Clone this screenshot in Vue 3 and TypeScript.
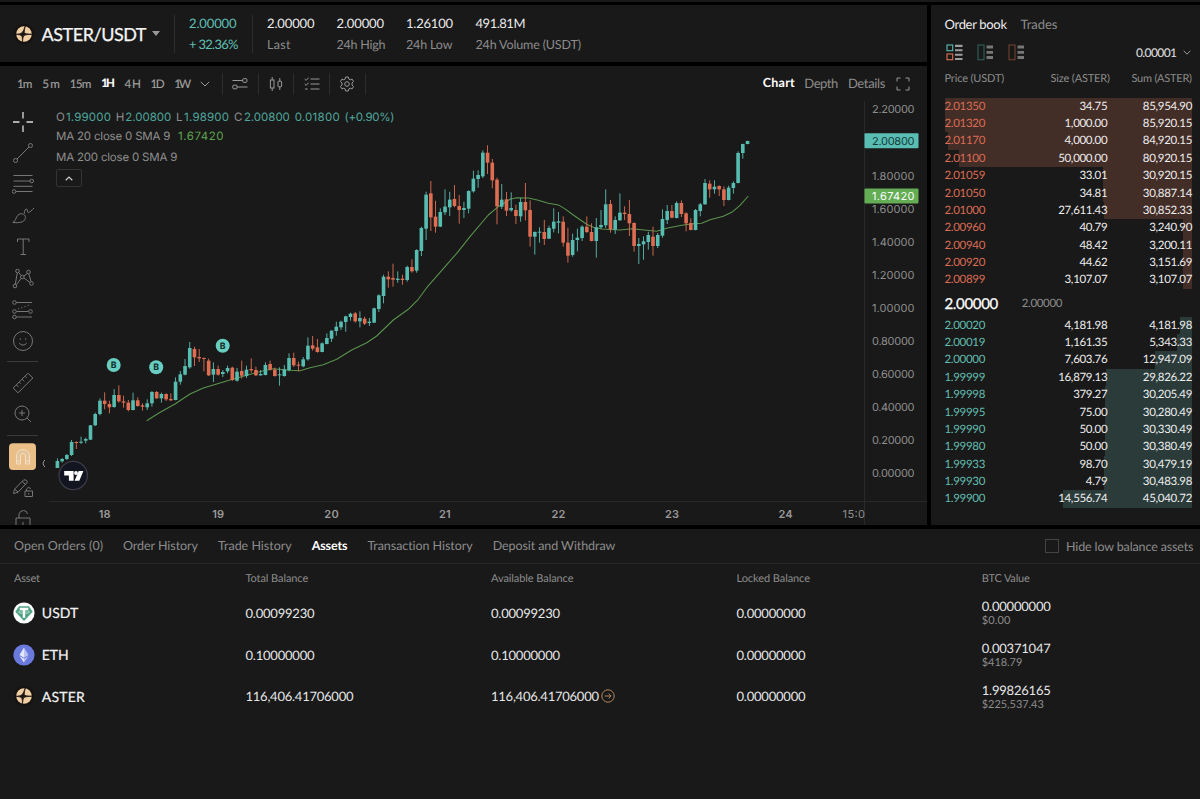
<script setup lang="ts">
type Row = [string, string, string, number]
type Candle = { x: number; up: boolean; hi: number; top: number; bot: number; lo: number }

// Tracks a label so that its glyphs span the given width in pixels.
const vFit = {
  mounted(el: HTMLElement, binding: { value: number }) {
    const n = (el.textContent ?? '').length
    if (n < 2) return
    const natural = el.getBoundingClientRect().width
    const spacing = (binding.value + 1 - natural) / (n - 1)
    el.style.letterSpacing = `${spacing.toFixed(3)}px`
    el.style.marginRight = `${(-spacing).toFixed(3)}px`
  },
}

const stats = [
  { v: '2.00000', vw: 46.5, l: 'Last', lw: 22.5, w: 69.5 },
  { v: '2.00000', vw: 46.5, l: '24h High', lw: 48, w: 69.5 },
  { v: '1.26100', vw: 46, l: '24h Low', lw: 45.5, w: 69.5 },
  { v: '491.81M', vw: 49, l: '24h Volume (USDT)', lw: 104.5, w: 110 },
]

const intervals: [string, number][] = [['1m', 14.5], ['5m', 16.8], ['15m', 20.8], ['1H', 12.6], ['4H', 15.4], ['1D', 13], ['1W', 15.8]]
const views: [string, number][] = [['Chart', 31], ['Depth', 33], ['Details', 36.5]]

const legend: [string, number, string, number][] = [
  ['O', 8, '1.99000', 44], ['H', 7.5, '2.00800', 45], ['L', 6, '1.98900', 44], ['C', 8, '2.00800', 45],
]

const asks: Row[] = [
  ['2.01350', '34.75', '85,954.90', 247.5], ['2.01320', '1,000.00', '85,920.15', 247.3],
  ['2.01170', '4,000.00', '84,920.15', 244.3], ['2.01100', '50,000.00', '80,920.15', 233],
  ['2.01059', '33.01', '30,920.15', 89], ['2.01050', '34.81', '30,887.14', 88.8],
  ['2.01000', '27,611.43', '30,852.33', 88.5], ['2.00960', '40.79', '3,240.90', 9.3],
  ['2.00940', '48.42', '3,200.11', 9.1], ['2.00920', '44.62', '3,151.69', 9], ['2.00899', '3,107.07', '3,107.07', 8.8],
]
const bids: Row[] = [
  ['2.00020', '4,181.98', '4,181.98', 12], ['2.00019', '1,161.35', '5,343.33', 15.3],
  ['2.00000', '7,603.76', '12,947.09', 37], ['1.99999', '16,879.13', '29,826.22', 85.6],
  ['1.99998', '379.27', '30,205.49', 86.8], ['1.99995', '75.00', '30,280.49', 87],
  ['1.99990', '50.00', '30,330.49', 87.2], ['1.99980', '50.00', '30,380.49', 87.4],
  ['1.99933', '98.70', '30,479.19', 87.7], ['1.99930', '4.79', '30,483.98', 87.7], ['1.99900', '14,556.74', '45,040.72', 129.3],
]

const tabs: [string, number][] = [
  ['Open Orders (0)', 88], ['Order History', 74], ['Trade History', 72.7], ['Assets', 34.7],
  ['Transaction History', 104.5], ['Deposit and Withdraw', 121.7],
]
const heads: [string, number][] = [['Asset', 25], ['Total Balance', 61.7], ['Available Balance', 81.5], ['Locked Balance', 72.5], ['BTC Value', 47]]
const assets = [
  { id: 'usdt', name: 'USDT', nw: 35.5, total: '0.00099230', tw: 68, btc: '0.00000000', usd: '$0.00', uw: 27.5 },
  { id: 'eth', name: 'ETH', nw: 26, total: '0.10000000', tw: 68, btc: '0.00371047', usd: '$418.79', uw: 39.5 },
  { id: 'aster', name: 'ASTER', nw: 42, total: '116,406.41706000', tw: 107, btc: '1.99826165', usd: '$225,537.43', uw: 61 },
]

// Candle rows: direction, high, body top, body bottom, low, in thirds of a pixel below the segment base.
const segments: { base: number; rows: string }[] = [
  { base: 320, rows: 'u415 423 444 444,u414 417 424 428,u402 405 417 420,u360 366 405 408,d364 366 369 387,u350 365 368 372,u353 357 362 370,u315 316 359 360,u278 282 316 318,u235 242 282 286,d217 242 252 268,d242 252 262 280,u207 225 261 263,d196 225 244 248,d227 244 248 263,d240 248 270 274,u218 241 270 271,d232 241 258 260,d250 256 260 272,u238 250 262 270,u213 216 250 260,d213 216 235 237,u218 222 235 248,d220 222 238 243,d220 237 241 243,u172 185 240 241,u153 163 185 194,u117 138 164 166,u66 84 142 146,d80 87 112 138,d87 111 115 126,d112 114 117 154,d116 122 166 168,u127 147 164 186,d137 147 164 167,u150 156 162 171,u137 144 154 160,d140 143 180 183,u144 155 182 185,d122 153 167 176,u137 149 168 174,d115 147 151 158,d140 150 166 168,u150 162 166 167,u127 135 165 166,d122 132 149 152,d143 149 168 170,u142 163 166 197,u135 148 168 170,u100 114 150 154,d98 114 136 141,d125 134 137 154,u111 118 139 142' },
  { base: 220, rows: 'u352 377 418 422,d348 376 386 392,d357 382 396 398,u367 370 396 397,u340 354 372 373,u331 332 356 366,u305 320 333 347,u302 305 322 330,u287 289 306 335,u278 281 291 302,d276 280 304 308,u274 294 304 322,d290 296 311 315,u294 305 309 318,u263 265 308 309,u223 226 267 276,u164 170 228 250,d154 170 178 203,d131 174 179 200,u154 176 180 188,d164 176 180 194,u137 141 180 185,d118 141 154 158,u88 90 152 158,u20 24 93 108' },
  { base: 130, rows: 'u185 194 296 330,d153 190 262 303,d212 260 290 308,u235 246 290 291,u178 230 247 255,u185 209 232 258,d165 207 228 232,d195 228 240 281,u215 234 240 264,u181 183 236 250,u122 146 184 188,u121 135 147 173,u61 68 139 144,d46 68 98 132,d87 98 151 175,d143 149 229 283,u162 209 230 237,d186 208 242 258,u187 234 241 245,d224 240 258 282,u204 216 259 275,d159 216 241 271,d211 240 320 350,u304 306 320 374,u292 305 308 338,d270 306 327 345,u287 294 326 327,u235 275 296 307,u246 274 278 310,d259 275 338 350,d293 338 377 398,u311 330 375 380,u296 323 330 364,u286 290 324 333,d259 290 306 309,d280 306 333 334,u264 292 333 383,u240 285 292 297,u178 223 286 294,d210 222 298 308,u259 270 299 312,u190 248 271 272,d229 248 252 270,d210 252 280 318,d277 279 348 365,u324 342 348 402,u319 334 343 389,u305 315 336 359,d290 320 348 377,u309 315 348 354,u238 267 317 323,u225 243 270 282,d225 243 263 265,u214 219 264 265,d211 219 252 261,d247 250 280 304,d265 279 300 301,u237 240 300 301,u219 223 243 259,u147 159 223 224,d151 161 178 203,u151 170 178 191,d166 168 178 198,d169 178 210 228,u167 173 210 211,u154 159 174 191,u64 69 159 160,u41 42 69 86,u32 33 42 43' },
]
const candles: Candle[] = segments
  .flatMap(s => s.rows.split(',').map(r => ({ up: r[0] === 'u', v: r.slice(1).split(' ').map(n => s.base + Number(n) / 3) })))
  .map((c, i) => ({ x: 57.4 + i * 4.727, up: c.up, hi: c.v[0], top: c.v[1], bot: c.v[2], lo: c.v[3] }))

const average = '146.7,420.7 159.3,412.7 175,404 190,394 203.3,388 216.7,384 232.3,379.3 251.3,374 266.7,370 273.3,368.7 289,370.3 300,370.7 310,367.7 323.3,364.7 336.7,359.3 351.7,350 366.7,342.7 376.7,336 393.3,320 408.3,309.3 418.3,299.3 426.7,287.7 443.3,268.7 456.7,253.3 470,236.7 488.3,215 498.3,206.7 510,199.3 516.7,197.7 528.3,198 538.3,200.3 548.3,203.3 558.3,204.9 565,208.9 573.3,215 586.7,224.3 593.3,227.3 601.7,229 620,230 631.7,228.7 646.7,230.3 656.7,231.3 666.7,228.3 681.7,225.3 693.3,223.7 701.7,223.3 710,219.7 723.3,216.3 731.7,212.3 740,205.3 748.3,196'

const priceTicks: [string, number][] = [
  ['2.20000', 109], ['1.80000', 175.5], ['1.60000', 208.6], ['1.40000', 241.7], ['1.20000', 274.8], ['1.00000', 307.8],
  ['0.80000', 340.8], ['0.60000', 373.9], ['0.40000', 406.9], ['0.20000', 440], ['0.00000', 473],
]
const days: [string, number][] = [['18', 104.8], ['19', 218.3], ['20', 331.6], ['21', 445], ['22', 558.6], ['23', 672.2], ['24', 785.7]]
const buys: [number, number][] = [[113.7, 365], [156.2, 367.2], [222.7, 345.8]]
</script>

<template>
  <div class="screen">
    <div class="strip"></div>
    <div class="upper">
      <div class="left">
        <header class="pair">
          <div class="symbol">
            <svg class="coin" viewBox="0 0 22 22"><circle cx="11" cy="11" r="10.2" fill="#15120f" /><circle cx="11" cy="11" r="7.8" fill="#f0cfa2" /><path d="M12.3 3Q11.2 7.500 11.300 9.800Q12 11 19 11.200Q12.500 11.500 11 12.500Q10 13.500 9.400 19Q9.600 14 8.600 12.700Q7 11.600 3 11.300Q7.500 11 9 9.800Q10.500 8 12.300 3Z" fill="#1c1612" stroke="#1c1612" stroke-width=".7" /></svg>
            <span v-fit="104" class="name">ASTER/USDT</span>
            <i class="caret"></i>
          </div>
          <div class="change">
            <span v-fit="46.5">2.00000</span>
            <span v-fit="48.5">+ 32.36%</span>
          </div>
          <div v-for="s in stats" :key="s.l" class="stat" :style="{ width: s.w + 'px' }">
            <span v-fit="s.vw" class="value">{{ s.v }}</span>
            <span v-fit="s.lw" class="label">{{ s.l }}</span>
          </div>
        </header>

        <section class="chart">
          <div class="toolbar">
            <div class="intervals">
              <span v-for="t in intervals" :key="t[0]" v-fit="t[1]" :class="{ on: t[0] === '1H' }">{{ t[0] }}</span>
            </div>
            <svg class="chev" viewBox="0 0 10 6"><path d="M.8.8 5 5 9.2.8" /></svg>
            <div class="tools">
              <span><svg viewBox="0 0 16 16"><path d="M.5 4.5h10M5 11h10.5" /><rect x="10.7" y="2.7" width="4.2" height="3.6" rx=".8" /><rect x=".8" y="9.2" width="4.2" height="3.6" rx=".8" /></svg></span>
              <span><svg viewBox="0 0 16 16"><path d="M4.2 1v3M4.2 12v3M11.8 2v3.2M11.8 10.8V14" /><rect x="2.4" y="4" width="3.6" height="8" /><rect x="10" y="5.2" width="3.6" height="5.6" rx=".6" /></svg></span>
              <span><svg viewBox="0 0 16 16"><path d="M6.5 3h9M6.5 8h9M6.5 13h9M.7 3l1.4 1.4L4.6 1.7M.7 8l1.4 1.4L4.6 6.7M1 13h2.7" /></svg></span>
              <span><svg viewBox="0 0 16 16"><circle cx="8" cy="8" r="2.3" /><path d="M6.7 1h2.6l.5 2 1.4.8 2-.6 1.3 2.3L13 7v2l1.5 1.5-1.3 2.3-2-.6-1.4.8-.5 2H6.7l-.5-2-1.4-.8-2 .6-1.3-2.3L3 9V7L1.500 5.500l1.300-2.300 2 .6 1.400-.8z" /></svg></span>
            </div>
            <div class="views">
              <span v-for="v in views" :key="v[0]" v-fit="v[1]" :class="{ on: v[0] === 'Chart' }">{{ v[0] }}</span>
              <svg class="full" viewBox="0 0 14 14"><path d="M1 4.500V1h3.500M9.500 1H13v3.500M13 9.500V13H9.500M4.500 13H1V9.500" /></svg>
            </div>
          </div>

          <div class="body">
            <aside class="side">
              <span class="lit"><svg viewBox="0 0 22 22"><path d="M11 1v6.500M11 14.500V21M1 11h6.500M14.500 11H21" /></svg></span>
              <span><svg viewBox="0 0 22 22"><circle cx="3.500" cy="18.500" r="2" /><circle cx="18.500" cy="3.500" r="2" /><path d="M5 17 17 5" /></svg></span>
              <span><svg viewBox="0 0 22 22"><path d="M1.500 2.500h19M1.500 8h16.500M1.500 13.300h19M4 18.500h16.500" /><circle cx="19.700" cy="8" r="1.800" /><circle cx="2" cy="18.500" r="1.800" /></svg></span>
              <span><svg viewBox="0 0 22 22"><path d="M.8 17.500C4 16.500 4 9.500 8.500 8.800c3.500-.4 5.500 2 4.800 4.700C12.300 17.500 7 18 .8 17.500zM12.500 8.500c-.8-3 1.500-5 2.300-4.500s.2 3.500 1.700 3.500c1.500-.2 3.500-2.500 5.500-4.500" /></svg></span>
              <span><svg viewBox="0 0 22 22"><path d="M5.500 6V3h11.500v3M11.200 3v15.500M8.500 18.500h5.500" /></svg></span>
              <span><svg viewBox="0 0 22 22"><circle cx="5.500" cy="4" r="1.800" /><circle cx="16.500" cy="5" r="1.800" /><circle cx="10.300" cy="10" r="1.800" /><circle cx="3" cy="19" r="1.800" /><circle cx="19.500" cy="16.500" r="1.800" /><path d="M5.300 6 3.300 17M6.700 5.500l2.500 3M15.300 6.500l-3.600 2.600M16.800 7l2.300 7.600M9 11.500 4.500 17.500M12 11l6 4.500" /></svg></span>
              <span><svg viewBox="0 0 22 22"><circle cx="2.500" cy="3.500" r="1.800" /><circle cx="2.500" cy="12.500" r="1.800" /><circle cx="18.500" cy="12.500" r="1.800" /><circle cx="2.500" cy="18" r="1.800" /><path d="M4.500 3.500H20M4.500 12.500h12M4.500 18H20" /><path d="M6 10 19 5.500" stroke-dasharray="1.200 2.200" /></svg></span>
              <span><svg viewBox="0 0 22 22"><circle cx="11" cy="11" r="9.500" /><path d="M7.300 13.200q3.700 3.800 7.400 0M8.300 8.300v1.500M13.700 8.300v1.500" /></svg></span>
              <i></i>
              <span><svg viewBox="0 0 22 22"><path d="M1.200 16 16 1.200l4.800 4.800L6 20.800zM4.500 13l2 2M7.300 10.200l1.500 1.500M10.200 7.300l2 2M13.200 4.300l1.500 1.500" /></svg></span>
              <span><svg viewBox="0 0 22 22"><circle cx="10" cy="10" r="7" /><path d="m15 15 4 4M7 10h6M10 7v6" /></svg></span>
              <i></i>
              <span class="magnet"><svg viewBox="0 0 22 22"><path d="M4.500 18V10a6.500 6.500 0 0 1 13 0v8h-4v-8a2.500 2.500 0 0 0-5 0v8zM4.500 15h4M13.500 15h4" /></svg></span>
              <span><svg viewBox="0 0 22 22"><path d="M1.500 16.500 2.500 12.200 11.500 3q2.800-1.200 4 2L6 15.300zM10 4.500l4 3.300M2.800 12.200l3.300 3M13 14h7.500v5.500H13zM14.500 14v-2q1.500-3 4.300-.5M16.700 16v1.500" /></svg></span>
              <span><svg viewBox="0 0 22 22"><path d="M4 10h14v11H4zM7 10V6q1-3.500 4.500-3.500T15.500 6M11 14v3" /></svg></span>
            </aside>

            <div class="plot">
              <svg class="canvas" viewBox="49 101 878 424">
                <g stroke="#292929"><path d="M49 501.500H927M864.500 101V525" /></g>
                <polyline :points="average" fill="none" stroke="#5b934f" stroke-width="1.050" stroke-linejoin="round" />
                <g v-for="(c, i) in candles" :key="i" :fill="c.up ? '#58bdb1' : '#df6d52'">
                  <rect :x="c.x - 0.45" :y="c.hi" width=".9" :height="c.lo - c.hi" />
                  <rect :x="c.x - 1.8" :y="c.top" width="3.600" :height="Math.max(c.bot - c.top, 1)" />
                </g>
                <g v-for="b in buys" :key="b[0]">
                  <circle :cx="b[0]" :cy="b[1]" r="7" fill="#68cec1" />
                  <text :x="b[0]" :y="b[1] + 3.1" class="buy">B</text>
                </g>
                <text v-for="p in priceTicks" :key="p[0]" x="872" :y="p[1] + 4" textLength="42.500" class="tick">{{ p[0] }}</text>
                <rect x="864.500" y="133.300" width="54" height="15" rx="1" fill="#59bdb4" />
                <text x="872" y="144.900" textLength="42.500" class="tick dark">2.00800</text>
                <rect x="864.500" y="188.600" width="54" height="15" rx="1" fill="#64ad55" />
                <text x="872" y="200.200" textLength="42.500" class="tick white">1.67420</text>
                <text v-for="d in days" :key="d[0]" :x="d[1]" y="517.500" class="day">{{ d[0] }}</text>
                <text x="842.500" y="517.500" textLength="22.500" class="tick">15:0</text>
                <circle cx="73.200" cy="475.500" r="14.200" fill="#131521" stroke="#3d3c4a" stroke-width="1.200" />
                <g fill="#fff"><path d="M64.200 471h9.400v9.800h-4.700v-5.200h-4.700zM78.700 471h4.700l-4.100 9.800h-4.700z" /><circle cx="76" cy="473" r="1.900" /></g>
              </svg>
              <svg class="fold" viewBox="0 0 5 9"><path d="M3.800 1Q.5 4.500 3.800 8" /></svg>
              <div class="legend">
                <div class="line">
                  <div v-for="(l, i) in legend" :key="i" class="duo"><span class="k" :style="{ width: l[1] + 1 + 'px' }">{{ l[0] }}</span><span v-fit="l[3]" class="v">{{ l[2] }}</span></div>
                  <span v-fit="44" class="v">0.01800</span><span v-fit="49" class="v">(+0.90%)</span>
                </div>
                <div class="line wide"><span v-fit="113.500">MA 20 close 0 SMA 9</span><span v-fit="44.500" class="g">1.67420</span></div>
                <div class="line"><span v-fit="120.300">MA 200 close 0 SMA 9</span></div>
                <div class="up"><svg viewBox="0 0 8 5"><path d="M.7 4.200 4 1l3.300 3.200" /></svg></div>
              </div>
            </div>
          </div>
        </section>
      </div>

      <section class="book">
        <div class="booktabs"><span v-fit="61.500" class="on">Order book</span><span v-fit="36">Trades</span></div>
        <div class="modes">
          <svg viewBox="0 0 17 17"><g fill="none" stroke-width="1.100"><rect x="1" y="1" width="5.700" height="5.700" stroke="#58bdb1" /><rect x="1" y="10" width="5.700" height="5.700" stroke="#e0714d" /></g><path d="M9 1.900h7.500M9 6.200h7.500M9 10.700h7.500M9 15h7.500" stroke="#9d9d9d" stroke-width="2.100" /></svg>
          <svg viewBox="0 0 17 17"><rect x="1" y="1" width="6" height="14.700" fill="none" stroke="#2f5f5a" stroke-width="1.100" /><path d="M9.500 3h6.500M9.500 8.300h6.500M9.500 13.500h6.500" stroke="#777" stroke-width="2.800" /></svg>
          <svg viewBox="0 0 17 17"><rect x="1" y="1" width="6" height="14.700" fill="none" stroke="#71402f" stroke-width="1.100" /><path d="M9.500 3h6.500M9.500 8.300h6.500M9.500 13.500h6.500" stroke="#777" stroke-width="2.800" /></svg>
          <span v-fit="40" class="prec">0.00001</span>
          <svg class="chev2" viewBox="0 0 8 5"><path d="M.7.7 4 4.200 7.300.7" /></svg>
        </div>
        <div class="cols"><span><b v-fit="58.700">Price (USDT)</b></span><span class="c2"><b v-fit="58.500">Size (ASTER)</b></span><span class="c3"><b v-fit="59.500">Sum (ASTER)</b></span></div>
        <div class="rows asks">
          <div v-for="r in asks" :key="r[0]" class="row">
            <i :style="{ width: r[3] + 'px' }"></i><span>{{ r[0] }}</span><span>{{ r[1] }}</span><span>{{ r[2] }}</span>
          </div>
        </div>
        <div class="mid"><span v-fit="52.700" class="big">2.00000</span><span v-fit="39.700" class="small">2.00000</span></div>
        <div class="rows bids">
          <div v-for="r in bids" :key="r[0]" class="row">
            <i :style="{ width: r[3] + 'px' }"></i><span>{{ r[0] }}</span><span>{{ r[1] }}</span><span>{{ r[2] }}</span>
          </div>
        </div>
      </section>
    </div>

    <section class="wallet">
      <nav>
        <span v-for="t in tabs" :key="t[0]" v-fit="t[1]" :class="{ on: t[0] === 'Assets' }">{{ t[0] }}</span>
        <label><i class="box"></i><span v-fit="126.500">Hide low balance assets</span></label>
      </nav>
      <div class="grid head"><div v-for="h in heads" :key="h[0]"><span v-fit="h[1]">{{ h[0] }}</span></div></div>
      <div v-for="a in assets" :key="a.id" class="grid item">
        <div class="who">
          <svg v-if="a.id === 'usdt'" viewBox="0 0 22 22"><circle cx="11" cy="11" r="10.600" fill="#fff" /><path d="M6 4.300h10l3.700 5.500L11 19 2.300 9.800z" fill="#4fa283" /><path d="M6.700 5.800h8.600v2.300h-3.100v7.700H9.800V8.100H6.700z" fill="#fff" /><ellipse cx="11" cy="10" rx="5.500" ry="1.300" fill="none" stroke="#fff" stroke-width=".6" /></svg>
          <svg v-else-if="a.id === 'eth'" viewBox="0 0 22 22"><circle cx="11" cy="11" r="10.600" fill="#6a79dc" /><path d="M11 3.500 6.500 11 11 13.700z" fill="#e4e8fb" /><path d="M11 3.500 15.500 11 11 13.700z" fill="#b9c1f0" /><path d="M6.500 12 11 14.700V18.500z" fill="#e4e8fb" /><path d="M15.500 12 11 14.700V18.500z" fill="#b9c1f0" /></svg>
          <svg v-else viewBox="0 0 22 22"><circle cx="11" cy="11" r="10.200" fill="#15120f" /><circle cx="11" cy="11" r="7.800" fill="#f0cfa2" /><path d="M12.300 3Q11.200 7.500 11.300 9.800Q12 11 19 11.200Q12.500 11.500 11 12.500Q10 13.500 9.400 19Q9.600 14 8.600 12.700Q7 11.600 3 11.300Q7.500 11 9 9.800Q10.500 8 12.300 3Z" fill="#1c1612" stroke="#1c1612" stroke-width=".7" /></svg>
          <span v-fit="a.nw">{{ a.name }}</span>
        </div>
        <div><span v-fit="a.tw">{{ a.total }}</span></div>
        <div>
          <span v-fit="a.tw">{{ a.total }}</span>
          <svg v-if="a.id === 'aster'" class="go" viewBox="0 0 14 14"><circle cx="7" cy="7" r="6.200" /><path d="M3.800 7h6.200M7.700 4.600 10.100 7 7.700 9.400" /></svg>
        </div>
        <div><span v-fit="68">0.00000000</span></div>
        <div class="btc"><span v-fit="68">{{ a.btc }}</span><span v-fit="a.uw" class="usd">{{ a.usd }}</span></div>
      </div>
    </section>
  </div>
</template>

<style>
body { background: #000; overflow: hidden; }
</style>

<style scoped>
.screen { width: 1200px; height: 799px; background: #000; display: flex; flex-direction: column; overflow: hidden; font-family: Lato, "Liberation Sans", sans-serif; color: #8c8c8c; text-rendering: geometricPrecision; font-size: 13px; box-sizing: border-box; }
.screen * { box-sizing: border-box; }
span, b { white-space: pre; font-weight: inherit; }
.strip { height: 2px; background: #1a1a1a; flex: none; }
.upper { display: flex; gap: 4px; height: 520px; margin: 3px 0 4px; flex: none; }
.left { width: 927px; display: flex; flex-direction: column; gap: 4px; }
.pair { height: 57px; background: #191919; display: flex; align-items: center; padding-left: 13px; }
.symbol { display: flex; align-items: center; width: 162px; height: 38px; border-right: 1px solid #2c2c2c; }
.coin { width: 22px; height: 22px; margin-right: 6.500px; }
.name { font-size: 18px; color: #f4f4f4; -webkit-text-stroke: .25px #f4f4f4; }
.caret { border: 4px solid transparent; border-top: 5px solid #999; border-bottom: 0; margin-left: 5.500px; }
.change { width: 78px; height: 38px; border-right: 1px solid #2c2c2c; padding-left: 14px; color: #5fc0b5; margin-right: 14px; }
.change, .stat { display: flex; flex-direction: column; justify-content: center; align-items: flex-start; flex: none; }
.change span, .stat span { line-height: 21px; }
.stat .value { color: #ececec; }
.stat .label { font-size: 12.500px; }
.chart { height: 459px; background: #191919; overflow: hidden; }
.toolbar { height: 35px; display: flex; align-items: center; padding-left: 17px; font-size: 12.500px; }
.toolbar .on { color: #fff; font-weight: 700; }
.intervals { display: flex; gap: 9.700px; color: #a0a0a0; font-size: 11.700px; -webkit-text-stroke: .15px currentColor; }
.intervals .on { font-size: 11.500px; }
.toolbar svg, .side svg, .fold, .up svg, .chev2 { fill: none; stroke: #999; }
.chev { width: 10px; height: 6px; margin-left: 8.500px; margin-right: 12.500px; }
.tools { display: flex; height: 22px; border-left: 1px solid #2c2c2c; }
.tools span { width: 35.700px; border-right: 1px solid #2c2c2c; display: flex; align-items: center; justify-content: center; }
.tools svg { width: 16px; height: 16px; }
.views { margin-left: auto; display: flex; align-items: center; gap: 9.600px; padding-right: 17px; font-size: 13px; }
.views span { margin-bottom: 1.500px; }
.views .on { font-size: 12.500px; }
.full { width: 14px; height: 14px; margin-left: 1px; }
.body { display: flex; height: 424px; }
.side { width: 49px; flex: none; padding: 5.300px 4px 0 0; display: flex; flex-direction: column; align-items: center; overflow: hidden; }
.side span { height: 31.270px; flex: none; display: flex; align-items: center; justify-content: center; width: 27px; }
.side svg { width: 22px; height: 22px; stroke: #777; flex: none; stroke-width: 1; }
.side .lit svg { stroke: #ddd; stroke-width: 1.300; }
.side i { height: 11px; flex: none; width: 31px; display: flex; align-items: center; }
.side i::after { content: ""; height: 1px; width: 100%; background: #3a3a3a; }
.side .magnet { background: #e9bf87; clip-path: inset(2.300px 0 round 4px); }
.side .magnet svg { stroke: #f5dfc0; fill: #e3c49a; }
.plot { position: relative; width: 878px; }
.canvas { display: block; width: 878px; height: 424px; }
.tick { font: 11px Inter, sans-serif; fill: #8f8f8f; }
.tick.dark { fill: #123a37; }
.tick.white { fill: #fff; }
.day { font: 600 11px Inter, sans-serif; fill: #999; text-anchor: middle; letter-spacing: .2px; }
.buy { font: 700 8.800px Inter, sans-serif; fill: #12302d; text-anchor: middle; }
.fold { position: absolute; left: -8px; top: 358px; width: 5px; height: 9px; }
.legend { position: absolute; left: 7px; top: 6px; font: 11.500px Inter, sans-serif; color: #8f8f8f; }
.line { height: 20px; line-height: 20px; display: flex; gap: 4.800px; }
.line.wide { gap: 7.500px; line-height: 19px; }
.duo { display: flex; gap: 1px; }
.line .v { color: #4fa79d; }
.line .g { color: #5ea350; }
.up { width: 26px; height: 18px; border: 1px solid #343434; border-radius: 2px; display: flex; align-items: center; justify-content: center; margin-top: 2px; }
.up svg { width: 8px; height: 5px; stroke: #ccc; stroke-width: 1.200; }
.book { width: 269px; height: 520px; background: #191919; padding: 8px 8px 0 13.500px; }
.booktabs { display: flex; gap: 13.500px; height: 22px; line-height: 22px; font-size: 13px; }
.booktabs .on { color: #eee; }
.modes { height: 32px; display: flex; align-items: center; padding-left: 1px; margin-top: 1px; }
.modes > svg:not(.chev2) { width: 17px; height: 17px; margin-right: 14px; }
.prec { margin-left: auto; color: #e2e2e2; font-size: 12px; }
.chev2 { width: 8px; height: 5px; margin-left: 6px; margin-right: 1px; }
.cols { display: grid; grid-template-columns: 79px 86.500px 1fr; height: 20px; line-height: 22px; font-size: 11px; }
.c2, .c3 { text-align: right; }
.cols b { display: inline-block; }
.rows { font-size: 11.500px; letter-spacing: -.32px; color: #eee; }
.asks { margin-top: 9.700px; }
.row { position: relative; height: 17.380px; line-height: 18.600px; display: grid; grid-template-columns: 79px 83.800px 1fr; text-align: right; }
.row span { position: relative; }
.row span:nth-child(2) { text-align: left; letter-spacing: -.32px; }
.row i { position: absolute; right: 0; top: 0; height: 100%; }
.asks i { background: #432d27; }
.bids i { background: #2a3b3a; }
.asks span:nth-child(2) { color: #dc6c54; }
.bids span:nth-child(2) { color: #62bdb0; }
.mid { height: 27.900px; display: flex; align-items: center; gap: 23.500px; padding-top: 1.500px; }
.big { font-size: 15px; color: #fff; -webkit-text-stroke: .3px #fff; }
.small { font-size: 11.500px; }
.wallet { height: 270px; background: #191919; flex: none; }
nav { height: 35px; border-bottom: 1px solid #272727; display: flex; align-items: center; gap: 20px; padding: 0 6.500px 0 14px; font-size: 12.500px; }
nav > span { margin-bottom: 2px; }
nav .on { color: #fff; font-weight: 700; }
label { margin-left: auto; display: flex; align-items: center; gap: 7px; }
.box { width: 14px; height: 14px; border: 1px solid #444; }
.grid { display: grid; grid-template-columns: 231.500px 245.500px 245.500px 245.300px 1fr; padding-left: 14px; align-items: center; }
.head { height: 28px; line-height: 15px; font-size: 11px; }
.item { height: 41.800px; font-size: 13px; color: #e8e8e8; }
.grid > div { display: flex; align-items: center; }
.who { gap: 6.500px; font-size: 14px; color: #f2f2f2; -webkit-text-stroke: .2px #f2f2f2; }
.who svg { width: 22px; height: 22px; margin-left: -.700px; }
.grid > .btc { flex-direction: column; align-items: flex-start; padding-top: 2px; }
.btc span { line-height: 15px; }
.btc .usd { font-size: 11px; color: #8c8c8c; line-height: 14px; }
.go { width: 14px; height: 14px; margin-left: 2.500px; fill: none; stroke: #b08a5c; }
</style>
